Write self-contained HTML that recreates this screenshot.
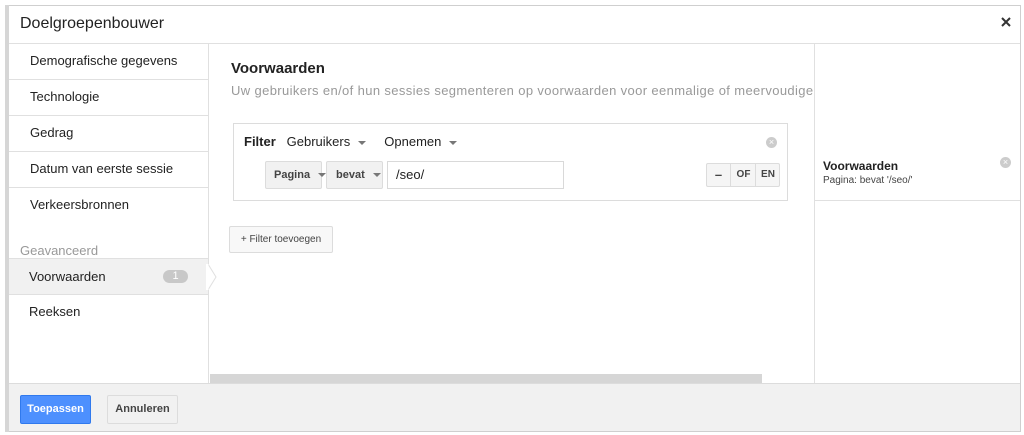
<!DOCTYPE html>
<html><head><style>
*{margin:0;padding:0;box-sizing:border-box}
body{width:1024px;height:435px;background:#fff;font-family:"Liberation Sans",sans-serif;position:relative;overflow:hidden;color:#222}
.a{position:absolute}
.item{position:absolute;left:9px;width:199px;height:36px;border-bottom:1px solid #e0e0e0;font-size:13px;padding-left:21px;line-height:34px;color:#222}
.btn{position:absolute;background:#f1f1f1;border:1px solid #dcdcdc;border-radius:2px;font-size:11px;font-weight:bold;color:#444;white-space:nowrap}
.car{display:inline-block;width:0;height:0;border-left:4px solid transparent;border-right:4px solid transparent;border-top:4px solid #777;vertical-align:middle;margin-left:8px}
.xc{position:absolute;width:11px;height:11px;border-radius:50%;background:#ccc;color:#fff;font-size:9px;line-height:11px;text-align:center}
</style></head><body>
<div class="a" style="left:5px;top:5px;width:1016px;height:427px;border:1px solid #cfcfcf"></div>
<div class="a" style="left:5px;top:5px;width:4px;height:427px;background:#d6d6d6"></div>
<div class="a" style="left:20px;top:15px;font-size:16px;color:#222">Doelgroepenbouwer</div>
<svg class="a" style="left:1001px;top:17px" width="10" height="10"><path d="M1 1L9 9M9 1L1 9" stroke="#333" stroke-width="2"/></svg>
<div class="a" style="left:9px;top:43px;width:1011px;height:1px;background:#e0e0e0"></div>
<div class="a" style="left:208px;top:44px;width:1px;height:339px;background:#e0e0e0"></div>
<div class="a" style="left:814px;top:44px;width:1px;height:339px;background:#e0e0e0"></div>
<div class="item" style="top:44px">Demografische gegevens</div>
<div class="item" style="top:80px">Technologie</div>
<div class="item" style="top:116px">Gedrag</div>
<div class="item" style="top:152px">Datum van eerste sessie</div>
<div class="item" style="top:188px;border-bottom:none">Verkeersbronnen</div>
<div class="a" style="left:20px;top:243px;font-size:13px;color:#999">Geavanceerd</div>
<div class="a" style="left:9px;top:258px;width:199px;height:37px;background:#f1f1f1;border-top:1px solid #e0e0e0;border-bottom:1px solid #e0e0e0"></div>
<div class="a" style="left:29px;top:269px;font-size:13px">Voorwaarden</div>
<div class="a" style="left:163px;top:270px;width:25px;height:13px;border-radius:7px;background:#c8c8c8;color:#fff;font-size:11px;text-align:center;line-height:13px">1</div>
<svg class="a" style="left:206px;top:264px" width="12" height="26"><path d="M2 0 L10 13 L2 26" fill="#fff" stroke="#e0e0e0"/><rect x="0" y="0" width="2.5" height="26" fill="#fff"/></svg>
<div class="a" style="left:29px;top:304px;font-size:13px">Reeksen</div>
<div class="a" style="left:231px;top:60px;font-size:15px;font-weight:bold;color:#222">Voorwaarden</div>
<div class="a" style="left:231px;top:83px;font-size:13px;letter-spacing:0.37px;color:#999;white-space:nowrap;width:583px;overflow:hidden">Uw gebruikers en/of hun sessies segmenteren op voorwaarden voor eenmalige of meervoudige</div>
<div class="a" style="left:233px;top:123px;width:555px;height:78px;border:1px solid #dcdcdc"></div>
<div class="a" style="left:244px;top:134px;font-size:13px;white-space:nowrap"><b>Filter</b>&nbsp;&nbsp;&nbsp;Gebruikers<span class="car"></span>&nbsp;&nbsp;&nbsp;&nbsp;&nbsp;Opnemen<span class="car"></span></div>
<div class="xc" style="left:766px;top:137px">×</div>
<div class="btn" style="left:265px;top:161px;width:57px;height:28px;line-height:26px;padding-left:8px">Pagina<span class="car"></span></div>
<div class="btn" style="left:326px;top:161px;width:57px;height:28px;line-height:26px;padding-left:9px">bevat<span class="car"></span></div>
<div class="a" style="left:387px;top:161px;width:177px;height:28px;border:1px solid #d9d9d9;font-size:13px;line-height:26px;padding-left:8px">/seo/</div>
<div class="btn" style="left:706px;top:163px;width:74px;height:24px;background:#f5f5f5"></div>
<div class="a" style="left:706px;top:163px;width:25px;height:24px;text-align:center;line-height:24px;font-size:13px;font-weight:bold;color:#444">–</div>
<div class="a" style="left:730px;top:163px;width:1px;height:24px;background:#dcdcdc"></div>
<div class="a" style="left:731px;top:163px;width:25px;height:24px;text-align:center;line-height:24px;font-size:10px;font-weight:bold;color:#444">OF</div>
<div class="a" style="left:755px;top:163px;width:1px;height:24px;background:#dcdcdc"></div>
<div class="a" style="left:756px;top:163px;width:24px;height:24px;text-align:center;line-height:24px;font-size:10px;font-weight:bold;color:#444">EN</div>
<div class="btn" style="left:229px;top:226px;width:104px;height:27px;line-height:25px;text-align:center;font-weight:normal;font-size:10px;background:#f8f8f8">+ Filter toevoegen</div>
<div class="a" style="left:210px;top:374px;width:552px;height:9px;background:#d6d6d6"></div>
<div class="a" style="left:823px;top:159px;font-size:12px;font-weight:bold">Voorwaarden</div>
<div class="a" style="left:823px;top:175px;font-size:10px;color:#444">Pagina: bevat '/seo/'</div>
<div class="xc" style="left:1000px;top:157px">×</div>
<div class="a" style="left:815px;top:200px;width:205px;height:1px;background:#e0e0e0"></div>
<div class="a" style="left:9px;top:383px;width:1011px;height:48px;background:#f1f1f1;border-top:1px solid #dcdcdc"></div>
<div class="a" style="left:20px;top:395px;width:71px;height:29px;background:#4d90fe;border:1px solid #3079ed;border-radius:2px;color:#fff;font-size:11px;font-weight:bold;text-align:center;line-height:27px">Toepassen</div>
<div class="btn" style="left:107px;top:395px;width:71px;height:29px;line-height:27px;text-align:center">Annuleren</div>
</body></html>
